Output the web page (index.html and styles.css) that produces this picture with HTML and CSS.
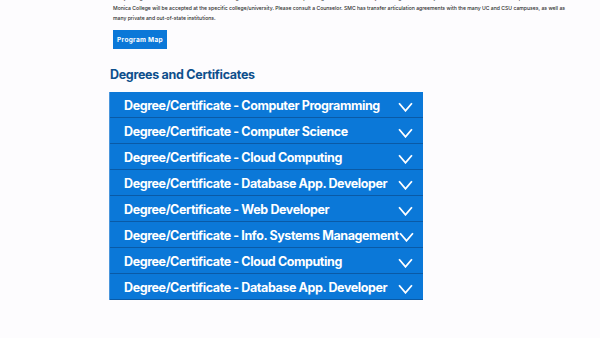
FILE: index.html
```html
<!DOCTYPE html>
<html lang="en">
<head>
<meta charset="utf-8">
<link rel="stylesheet" href="styles.css">
</head>
<body>
<main class="page">
  <p class="intro">Many colleges and universities offer bachelor's degrees in this field. Students planning to transfer to a four-year college or university should check which courses completed at Santa<br>Monica College will be accepted at the specific college/university. Please consult a Counselor. SMC has transfer articulation agreements with the many UC and CSU campuses, as well as<br>many private and out-of-state institutions.</p>
  <a class="btn" href="#">Program Map</a>
  <h2 class="heading">Degrees and Certificates</h2>
  <div class="accordion">
    <div class="row"><span>Degree/Certificate - Computer Programming</span><svg class="chev" viewBox="0 0 14 9"><path d="M1 1 L7 8 L13 1"/></svg></div>
    <div class="row"><span>Degree/Certificate - Computer Science</span><svg class="chev" viewBox="0 0 14 9"><path d="M1 1 L7 8 L13 1"/></svg></div>
    <div class="row"><span>Degree/Certificate - Cloud Computing</span><svg class="chev" viewBox="0 0 14 9"><path d="M1 1 L7 8 L13 1"/></svg></div>
    <div class="row"><span>Degree/Certificate - Database App. Developer</span><svg class="chev" viewBox="0 0 14 9"><path d="M1 1 L7 8 L13 1"/></svg></div>
    <div class="row"><span>Degree/Certificate - Web Developer</span><svg class="chev" viewBox="0 0 14 9"><path d="M1 1 L7 8 L13 1"/></svg></div>
    <div class="row"><span>Degree/Certificate - Info. Systems Management</span><svg class="chev" viewBox="0 0 14 9"><path d="M1 1 L7 8 L13 1"/></svg></div>
    <div class="row"><span>Degree/Certificate - Cloud Computing</span><svg class="chev" viewBox="0 0 14 9"><path d="M1 1 L7 8 L13 1"/></svg></div>
    <div class="row"><span>Degree/Certificate - Database App. Developer</span><svg class="chev" viewBox="0 0 14 9"><path d="M1 1 L7 8 L13 1"/></svg></div>
  </div>
</main>
</body>
</html>
```

FILE: styles.css
```css
html, body {
  margin: 0;
  padding: 0;
  background: #fdfcfe;
  overflow: hidden;
}
.page {
  width: 600px;
  height: 338px;
  font-family: Inter, "Noto Sans", sans-serif;
  padding-left: 109px;
  box-sizing: border-box;
}
.intro {
  margin: -7px 0 0 4px;
  font-size: 5.1px;
  line-height: 10px;
  color: #2b2b2b;
  font-weight: 500;
  white-space: nowrap;
}
.btn {
  display: inline-flex;
  align-items: center;
  justify-content: center;
  margin: 7px 0 0 4px;
  width: 54px;
  height: 19px;
  background: #0b78d8;
  color: #fff;
  font-size: 6.5px;
  font-weight: 700;
  letter-spacing: 0.3px;
  text-decoration: none;
}
.heading {
  margin: 17px 0 0 1px;
  font-size: 12.5px;
  line-height: 18px;
  font-weight: 700;
  letter-spacing: -0.3px;
  color: #0e4f8c;
}
.accordion {
  margin-top: 8px;
  width: 313px;
  border-left: 1px solid #4a96dc;
}
.row {
  height: 26px;
  box-sizing: border-box;
  border-bottom: 1px solid #0a5aa6;
  background: #0b78d8;
  display: flex;
  align-items: center;
  padding-left: 14px;
  padding-right: 10px;
  color: #fff;
  font-size: 12.5px;
  font-weight: 700;
  letter-spacing: -0.4px;
}
.row span {
  flex: 1;
  padding-top: 1px;
  white-space: nowrap;
}
.chev {
  flex-shrink: 0;
  width: 15px;
  height: 10px;
  margin-top: 4px;
  fill: none;
  stroke: #fff;
  stroke-width: 1.7;
}
```
